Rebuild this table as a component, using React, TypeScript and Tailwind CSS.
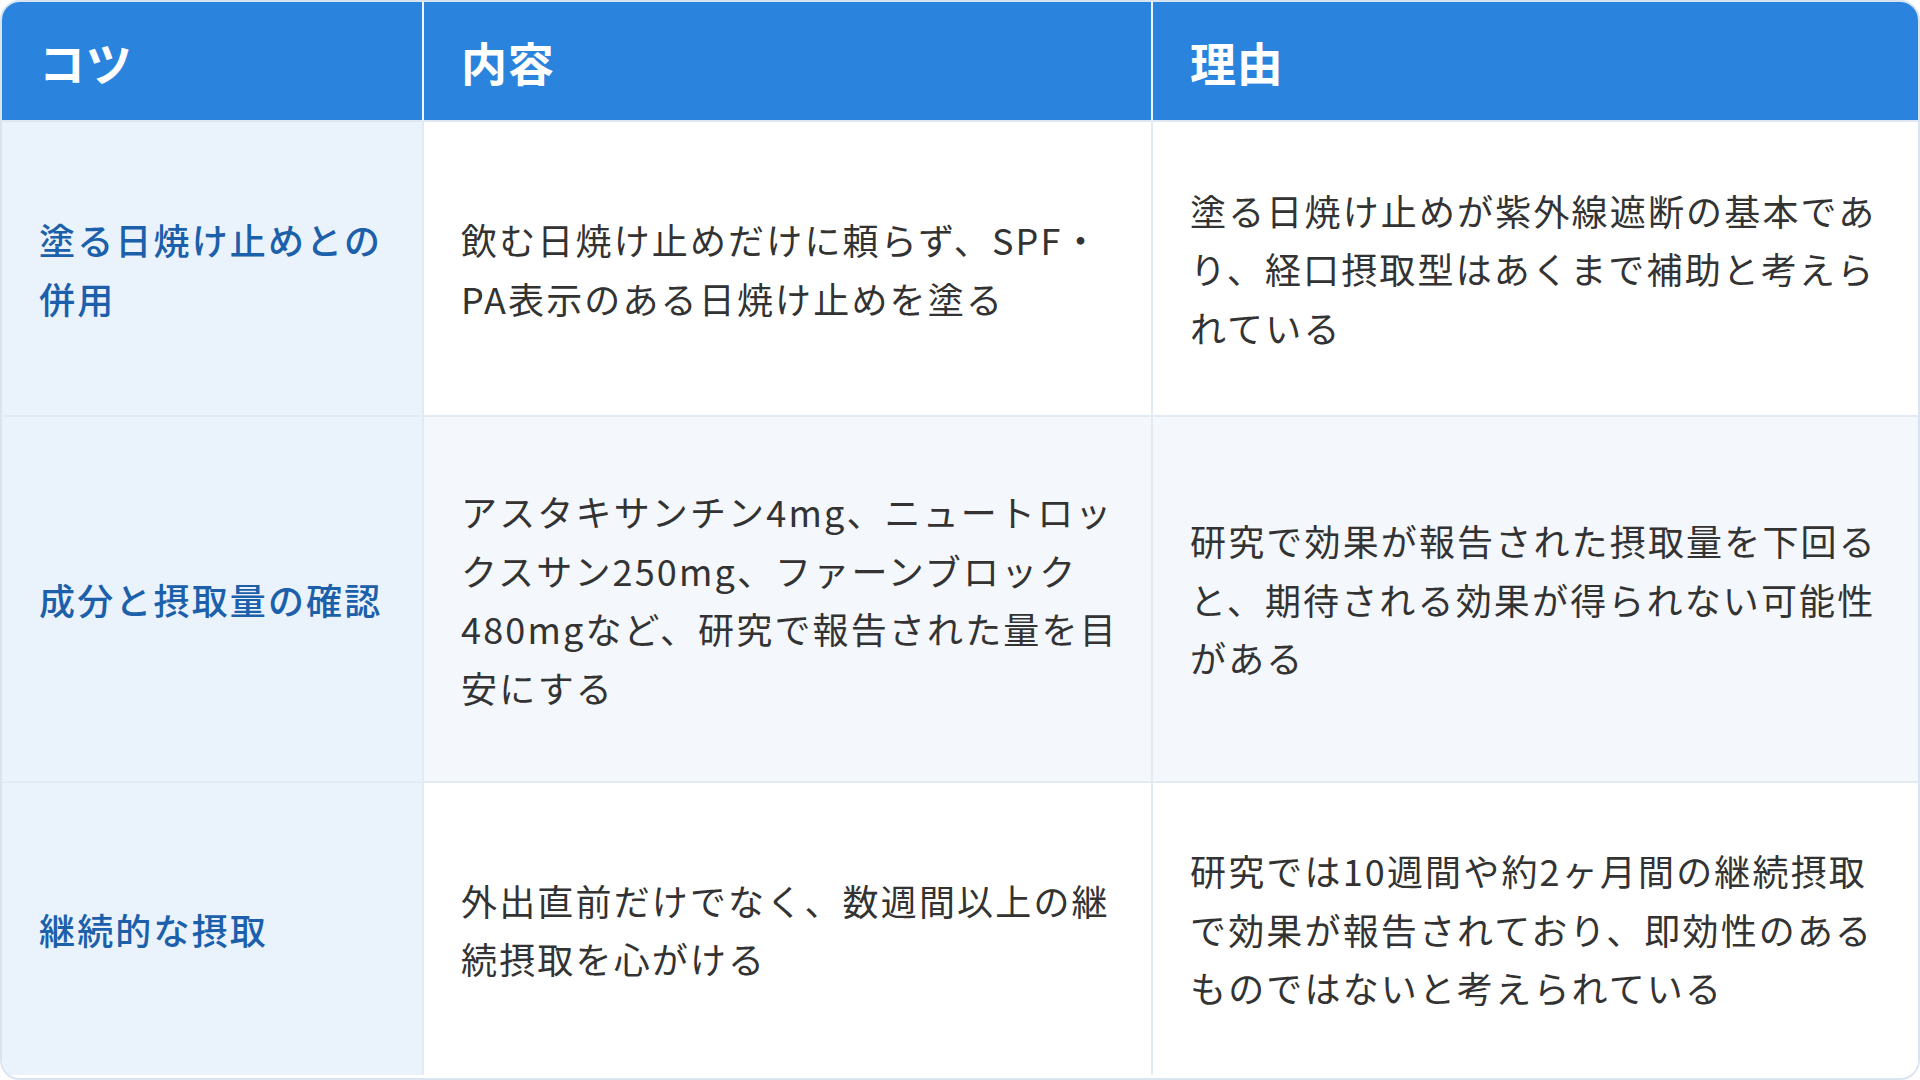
const ROWS = [
  {
    tip: "塗る日焼け止めとの併用",
    detail: "飲む日焼け止めだけに頼らず、SPF・PA表示のある日焼け止めを塗る",
    reason: "塗る日焼け止めが紫外線遮断の基本であり、経口摂取型はあくまで補助と考えられている",
    h: "h-[293px]",
    alt: false,
  },
  {
    tip: "成分と摂取量の確認",
    detail: "アスタキサンチン4mg、ニュートロックスサン250mg、ファーンブロック480mgなど、研究で報告された量を目安にする",
    reason: "研究で効果が報告された摂取量を下回ると、期待される効果が得られない可能性がある",
    h: "h-[366px]",
    alt: true,
  },
  {
    tip: "継続的な摂取",
    detail: "外出直前だけでなく、数週間以上の継続摂取を心がける",
    reason: "研究では10週間や約2ヶ月間の継続摂取で効果が報告されており、即効性のあるものではないと考えられている",
    h: "h-[294px]",
    alt: false,
  },
];

export default function App() {
  return (
    <div className="w-[1920px] h-[1080px] bg-white font-['Noto_Sans_CJK_JP','Noto_Sans',sans-serif]">
      <div className="h-full w-full overflow-hidden rounded-[20px] border-2 border-[#dae4f0]">
        <table className="w-full table-fixed border-separate border-spacing-0">
          <thead>
            <tr className="bg-[#2a84de] text-white tracking-wider">
              <th className="h-[120px] w-[420px] border-b-2 border-[#dfe8f2] px-[37px] text-left text-[46px] font-bold">
                コツ
              </th>
              <th className="h-[120px] w-[729px] border-b-2 border-l-2 border-b-[#dfe8f2] border-l-[#eef4fb] px-[37px] text-left text-[46px] font-bold">
                内容
              </th>
              <th className="h-[120px] border-b-2 border-l-2 border-b-[#dfe8f2] border-l-[#eef4fb] px-[37px] text-left text-[46px] font-bold">
                理由
              </th>
            </tr>
          </thead>
          <tbody className="text-[36px] leading-[58.5px] tracking-[0.06em]">
            {ROWS.map((r, i) => (
              <tr key={r.tip} className={r.h}>
                <td
                  className={`${i > 0 ? "border-t-2" : ""} border-[#e2eaf4] bg-[#eaf2fc] pl-[37px] pr-[24px] align-middle font-medium text-[#1c5faa]`}
                >
                  {r.tip}
                </td>
                <td
                  className={`${i > 0 ? "border-t-2" : ""} border-l-2 border-[#e2eaf4] ${r.alt ? "bg-[#f4f7fb]" : "bg-white"} pl-[37px] pr-[24px] align-middle text-[#333333]`}
                >
                  {r.detail}
                </td>
                <td
                  className={`${i > 0 ? "border-t-2" : ""} border-l-2 border-[#e2eaf4] ${r.alt ? "bg-[#f4f7fb]" : "bg-white"} pl-[37px] pr-[24px] align-middle text-[#333333]`}
                >
                  {r.reason}
                </td>
              </tr>
            ))}
          </tbody>
        </table>
      </div>
    </div>
  );
}
